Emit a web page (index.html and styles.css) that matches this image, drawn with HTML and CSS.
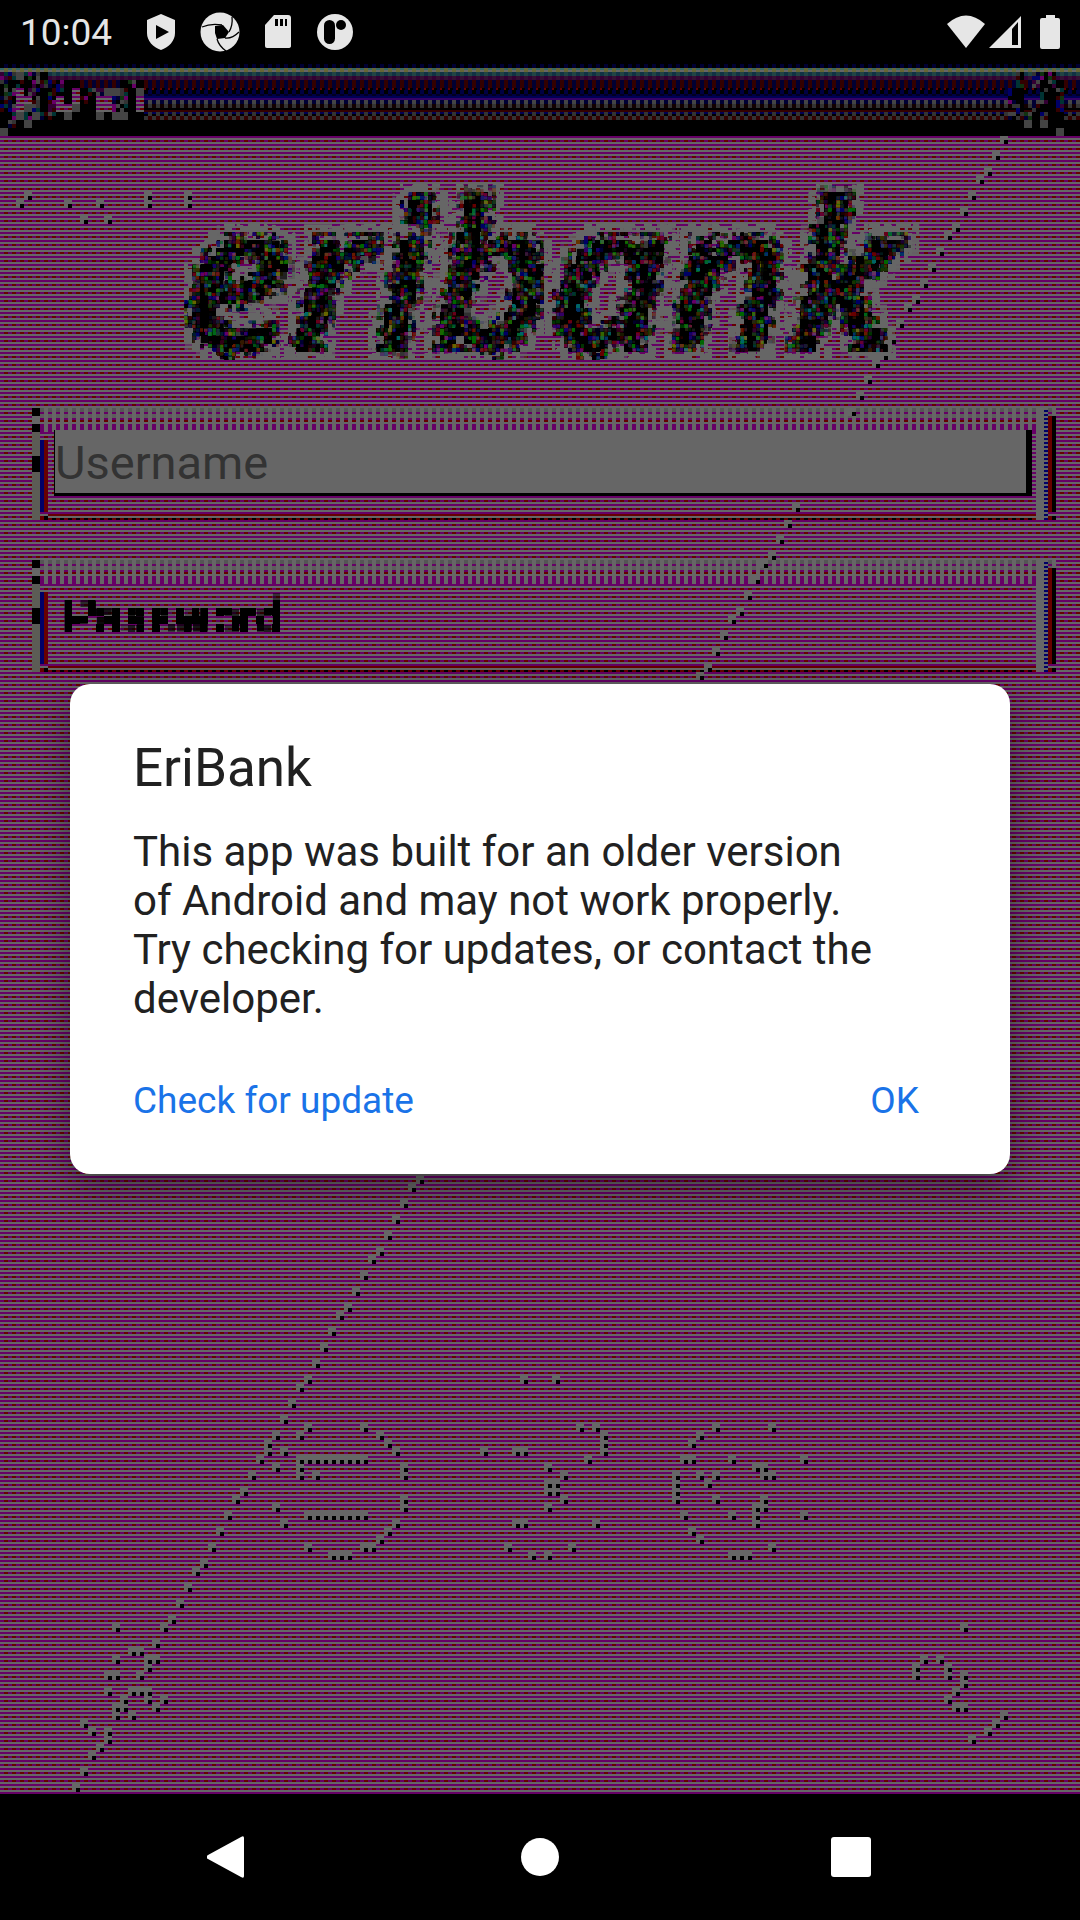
FILE: index.html
```html
<!DOCTYPE html>
<html lang="en">
<head>
<meta charset="utf-8">
<meta name="viewport" content="width=device-width, initial-scale=1">
<title>EriBank</title>
<link rel="stylesheet" href="styles.css">
</head>
<body>
<header class="status">
  <span class="clock">10:04</span>
  <div class="status-icons">
    <svg width="30" height="38" viewBox="0 0 30 38"><path fill="currentColor" fill-rule="evenodd" d="M15 1 29 7v13c0 8-6 14-14 17C7 34 1 28 1 20V7zM10 12v14l13-7z"/></svg>
    <svg width="40" height="40" viewBox="0 0 40 40"><circle cx="20" cy="20" r="19.500" fill="currentColor"/><path d="m15 14 8-1 6 7-4 6-8 1-2-6z"/><g fill="none" stroke="#000" stroke-width="1.300"><path d="M2 15q9-4 20-2M32 5q1 8-3 15M39 20q-7 7-14 6M26 39q-7-5-9-12M5 32"/></g></svg>
    <svg width="28" height="36" viewBox="0 0 28 36"><path fill="currentColor" d="M10 1h14q3 0 3 3v28q0 2-3 2H3q-2 0-2-2V11z"/><path d="M11 5h3v7h-3zM16 5h3v7h-3zM21 5h2v7h-2z"/></svg>
    <svg width="38" height="38" viewBox="0 0 38 38"><circle cx="19" cy="19" r="18" fill="currentColor"/><rect x="8" y="7" width="11" height="24" rx="5.500"/><circle cx="25" cy="12" r="5"/></svg>
  </div>
  <div class="signal-icons">
    <svg width="40" height="34" viewBox="0 0 40 34"><path fill="currentColor" d="M1 9Q20-8 39 9L20 33z"/></svg>
    <svg width="34" height="34" viewBox="0 0 34 34"><path fill="currentColor" fill-rule="evenodd" d="M33 1v32H1zM24 14v16h6V7z"/></svg>
    <svg class="battery" width="20" height="36" viewBox="0 0 20 36"><path fill="currentColor" d="M6 1h9v3h3q2 0 2 2v27q0 2-2 2H2q-2 0-2-2V6q0-2 2-2h4z"/></svg>
  </div>
</header>

<main class="screen">
  <div class="titlebar"></div>
  <h1 class="brand">eribank</h1>
  <form class="login">
    <div class="field"><input class="entry focused" type="text" placeholder="Username" aria-label="Username"></div>
    <div class="field"><input class="entry garbled" type="text" placeholder="Password" aria-label="Password"></div>
  </form>
  <svg class="mosaic" id="mosaic" aria-hidden="true" shape-rendering="crispEdges">
    <defs>
      <pattern id="dot" width="8" height="8" patternUnits="userSpaceOnUse"><path fill="#666" d="M0 0h8v8H0z"/><path d="M4 4h4v4H4z"/></pattern>
      <pattern id="stripe" width="8" height="8" patternUnits="userSpaceOnUse"><path fill="#666" d="M0 0h8v8H0z"/><path fill="#606" d="M0 0h8v2H0zM0 4h4v2H0z"/><path fill="#600" d="M4 4h4v2H4z"/></pattern>
      <filter id="blocks" x="0" y="0" width="100%" height="100%" color-interpolation-filters="sRGB">
        <feFlood x="3" y="3" width="2" height="2"/>
        <feComposite in2="SourceGraphic" operator="over" x="0" y="0" width="8" height="8" result="speck"/>
        <feTile in="speck" result="grid"/>
        <feComposite in="SourceGraphic" in2="grid" operator="in"/>
        <feMorphology operator="dilate" radius="3"/>
      </filter>
      <filter id="noisy" x="0" y="0" width="100%" height="100%" color-interpolation-filters="sRGB">
        <feFlood x="3" y="3" width="2" height="2" result="f8"/>
        <feOffset in="f8" x="0" y="0" width="8" height="8" result="c8"/>
        <feTile in="c8" result="g8"/>
        <feFlood x="1" y="1" width="2" height="2" result="f4"/>
        <feOffset in="f4" x="0" y="0" width="4" height="4" result="c4"/>
        <feTile in="c4" result="g4"/>
        <feMorphology in="SourceAlpha" operator="dilate" radius="12" result="wide"/>
        <feComposite in="wide" in2="g8" operator="in"/>
        <feMorphology operator="dilate" radius="3" result="haloShape"/>
        <feFlood flood-color="#666"/>
        <feComposite in2="haloShape" operator="in" result="halo"/>
        <feTurbulence type="fractalNoise" baseFrequency="0.150" numOctaves="1" seed="21"/>
        <feColorMatrix values="0 0 0 0 0  0 0 0 0 0  0 0 0 0 0  0 30 0 0 -12.500"/>
        <feComposite in2="g4" operator="in"/>
        <feMorphology operator="dilate" radius="1" result="haloMask"/>
        <feComposite in="halo" in2="haloMask" operator="in" result="raggedHalo"/>
        <feComposite in="SourceAlpha" in2="g8" operator="in"/>
        <feMorphology operator="dilate" radius="3" result="letters"/>
        <feTurbulence type="fractalNoise" baseFrequency="0.17" numOctaves="2" seed="7"/>
        <feColorMatrix values="3 0 0 0 -1.200  0 3 0 0 -1.250  0 0 3 0 -1.200  0 0 0 0 1"/>
        <feComponentTransfer><feFuncR type="discrete" tableValues="0 .1 .2 .4"/><feFuncG type="discrete" tableValues="0 .1 .2 .4"/><feFuncB type="discrete" tableValues="0 .1 .2 .4"/></feComponentTransfer>
        <feComposite in2="g4" operator="in"/>
        <feMorphology operator="dilate" radius="1" result="colour"/>
        <feMorphology in="SourceAlpha" operator="dilate" radius="6"/>
        <feComposite in2="g8" operator="in"/>
        <feMorphology operator="dilate" radius="3" result="rim"/>
        <feComposite in="colour" in2="rim" operator="in" result="edge"/>
        <feMorphology in="SourceAlpha" operator="erode" radius="10"/>
        <feComposite in2="g8" operator="in"/>
        <feMorphology operator="dilate" radius="3" result="core"/>
        <feTurbulence type="fractalNoise" baseFrequency="0.110" numOctaves="1" seed="3"/>
        <feColorMatrix values="0 0 0 0 0  0 0 0 0 0  0 0 0 0 0  30 0 0 0 -14"/>
        <feComposite in2="g4" operator="in"/>
        <feMorphology operator="dilate" radius="1" result="mask"/>
        <feComposite in="edge" in2="mask" operator="in" result="bits"/>
        <feMerge><feMergeNode in="raggedHalo"/><feMergeNode in="letters"/><feMergeNode in="bits"/><feMergeNode in="core"/></feMerge>
      </filter>
    </defs>
  </svg>
  <div class="scrim">
    <section class="dialog" role="dialog" aria-labelledby="dialog-title">
      <h2 class="dialog-title" id="dialog-title">EriBank</h2>
      <p class="dialog-text">This app was built for an older version of Android and may not work properly. Try checking for updates, or contact the developer.</p>
      <div class="actions"><button type="button">Check for update</button><button type="button">OK</button></div>
    </section>
  </div>
</main>

<nav class="navbar">
  <button type="button" aria-label="Back"><svg width="44" height="44" viewBox="0 0 44 44"><path fill="#fff" d="M34 2q3-2 3 1v38q0 3-3 1L1 24q-3-2 0-4z"/></svg></button>
  <button type="button" aria-label="Home"><svg width="44" height="44" viewBox="0 0 44 44"><circle cx="22" cy="22" r="19" fill="#fff"/></svg></button>
  <button type="button" aria-label="Recent apps"><svg width="44" height="44" viewBox="0 0 44 44"><rect x="2" y="2" width="40" height="40" rx="3" fill="#fff"/></svg></button>
</nav>
<script src="script.js"></script>
</body>
</html>
```
FILE: styles.css
```css
* { box-sizing: border-box; }

body {
  margin: 0;
  min-height: 100vh;
  display: flex;
  flex-direction: column;
  background: #000;
  font-family: Roboto, sans-serif;
}

button {
  border: 0;
  padding: 0;
  background: none;
  font: inherit;
}

.status {
  height: 64px;
  display: flex;
  align-items: center;
  padding: 0 20px;
  color: #e6e6e6;
}

.clock { font-size: 37px; line-height: 40px; padding-top: 2px; }

.status-icons {
  display: flex;
  align-items: center;
  gap: 24px;
  margin-left: 34px;
}

.signal-icons {
  display: flex;
  align-items: center;
  gap: 2px;
  margin-left: auto;
}

.battery { margin-left: 16px; }

.screen {
  position: relative;
  flex: 1;
  background:
    linear-gradient(#606 2px, #666 2px 4px, transparent 4px 6px, #666 6px) 0 0 / 8px 8px,
    linear-gradient(90deg, #606 4px, #600 4px) 0 0 / 8px 8px;
}

.titlebar {
  height: 72px;
  background:
    linear-gradient(90deg, #000 4px, #003 4px) 0 0 / 8px 4px repeat-x,
    linear-gradient(90deg, #366 4px, #663 4px) 0 4px / 8px 2px repeat-x,
    linear-gradient(90deg, #666 4px, #663 4px) 0 6px / 8px 2px repeat-x,
    linear-gradient(90deg, #134 4px, #244 4px) 0 8px / 8px 4px repeat-x,
    linear-gradient(90deg, #303 4px, #313 4px) 0 12px / 8px 4px repeat-x,
    linear-gradient(90deg, #300 4px, #003 4px) 0 16px / 8px 8px repeat-x,
    linear-gradient(90deg, #600 2px, #000 2px 5px, #003 5px) 0 24px / 8px 2px repeat-x,
    linear-gradient(90deg, #000 4px, #004 4px) 0 26px / 8px 4px repeat-x,
    linear-gradient(90deg, #004 4px, #002 4px) 0 30px / 8px 2px repeat-x,
    linear-gradient(#005 2px, #306 2px) 0 32px / 8px 4px repeat-x,
    linear-gradient(90deg, #444 4px, #003 4px) 4px 36px / 8px 4px repeat-x,
    linear-gradient(90deg, #333 4px, #100 4px) 4px 40px / 8px 4px repeat-x,
    linear-gradient(#000 2px, #300 2px) 0 44px / 8px 4px repeat-x,
    linear-gradient(90deg, #333 4px, #005 4px) 4px 48px / 8px 2px repeat-x,
    linear-gradient(90deg, #333 4px, #000 4px) 4px 50px / 8px 2px repeat-x,
    linear-gradient(90deg, #333 4px, #300 4px) 0 52px / 8px 4px repeat-x,
    #000;
}

.brand {
  margin: 0;
  height: 272px;
  font: italic 600 204px/268px "Open Sans", sans-serif;
  text-align: center;
  color: #000;
  filter: url(#noisy);
}

.login {
  display: grid;
  gap: 40px;
  padding: 0 24px 0 32px;
}

.field {
  height: 112px;
  padding: 22px 24px 24px 22px;
  background:
    linear-gradient(#000 8px, #666 8px 16px, #000 16px 24px, #5c5c55 24px 48px, #000 48px 64px, #5c5c55 64px) 0 0 / 8px 112px no-repeat,
    linear-gradient(90deg, #600 4px, #000 4px) 100% 8px / 8px 96px no-repeat,
    linear-gradient(#666 2px, #006 2px) calc(100% - 8px) 16px / 4px 4px repeat-y,
    linear-gradient(#666, #666) calc(100% - 12px) 0 / 8px 112px no-repeat,
    linear-gradient(90deg, #006 4px, #600 4px) 8px 32px / 8px 72px no-repeat,
    linear-gradient(#600, #600) 16px 106px / calc(100% - 32px) 2px no-repeat,
    linear-gradient(#666 2px, transparent 2px) 16px 108px / calc(100% - 32px) 4px no-repeat,
    linear-gradient(90deg, #600 4px, #000 4px) 0 108px / 8px 4px repeat-x,
    linear-gradient(90deg, #666 4px, transparent 4px) 4px 0 / 8px 24px repeat-x,
    linear-gradient(#555 4px, #606 4px 6px, #5c5c5c 6px 10px, #606 10px 12px, #600 12px 14px, #666 14px 16px, #606 16px) 0 0 / 8px 24px repeat-x;
}

.entry {
  display: block;
  width: 100%;
  height: 66px;
  border: 0;
  border-radius: 0;
  padding: 2px 0 0;
  outline: 0;
  background: none;
  font: 47px/56px Roboto, sans-serif;
  color: #333;
}

.entry::placeholder { color: #333; opacity: 1; }

.focused {
  background: #666;
  border: solid #000;
  border-width: 0 6px 3px 1px;
}

.garbled {
  margin: 2px 0 0 2px;
  height: 64px;
  padding-left: 8px;
  font-size: 50px;
  font-weight: 500;
  filter: url(#blocks);
}

.garbled::placeholder { color: #000; }

.mosaic {
  position: absolute;
  inset: 0;
  width: 100%;
  height: 100%;
  pointer-events: none;
}

.scrim {
  position: absolute;
  inset: 0;
  display: flex;
  align-items: center;
  justify-content: center;
  padding: 0 70px;
}

.dialog {
  width: 100%;
  padding: 53px 63px 38px;
  border-radius: 20px;
  background: #fff;
  color: #212121;
  box-shadow: 0 12px 36px rgba(0, 0, 0, .4);
}

.dialog-title {
  margin: 0 0 28px;
  font-size: 53px;
  font-weight: 400;
  line-height: 62px;
}

.dialog-text {
  margin: 0 0 43px;
  max-width: 745px;
  font-size: 42px;
  line-height: 49px;
}

.actions {
  display: flex;
  justify-content: space-between;
  padding-right: 28px;
  font-size: 37px;
  line-height: 70px;
}

.actions button { color: #1a73e8; }

.navbar {
  height: 126px;
  display: grid;
  grid-template-columns: repeat(3, 1fr);
  padding: 0 73px;
}

.navbar button {
  display: flex;
  align-items: center;
  justify-content: center;
}
```
FILE: script.js
```js
// Corrupted cells of the login screen, on an 8px grid: row -> columns.
const CELL = 8;
const TOP = 8; // rows taken by the status bar
const dots = {
  24: [3, 18, 23], 25: [2, 8, 12, 18, 23], 27: [10, 13],
  172: [38, 65, 69], 178: [38, 45, 72, 74, 89, 96],
  179: [34, 37, 47, 75, 87], 180: [48, 75, 86], 181: [33, 35, 49, 60, 64, 65, 75],
  182: [32, 37, 38, 39, 40, 41, 42, 43, 44, 45, 73, 85, 86, 91, 100],
  183: [34, 37, 50, 68, 94, 95], 184: [37, 39, 50, 70, 84, 87, 89, 95, 96],
  185: [68, 69, 84, 88], 186: [68, 69, 84], 187: [50, 70, 84, 89, 95],
  188: [34, 50, 68, 94, 95], 189: [38, 39, 40, 41, 42, 43, 44, 45, 85, 91, 94, 100],
  190: [35, 49, 64, 65, 74, 94], 191: [48, 86], 192: [47, 87],
  193: [38, 45, 46, 63, 71, 96], 194: [41, 42, 43, 66, 68, 91, 92, 93],
  203: [14, 120], 206: [16, 17], 207: [14, 18, 19, 115, 117],
  208: [18, 114, 118], 209: [13, 14, 17, 114, 118, 120], 210: [120],
  211: [13, 16, 17, 18, 119], 212: [15, 18, 20, 118], 213: [14, 15, 19, 119, 120],
  214: [14, 16, 125], 215: [10, 124], 216: [11, 13, 123], 217: [13, 121]
};

const svg = document.getElementById("mosaic");
const cell = (x, y, w = 1, h = 1) => `M${x * CELL} ${(y - TOP) * CELL}h${w * CELL}v${h * CELL}h${-w * CELL}z`;
function paint(fill, d) {
  const path = document.createElementNS("http://www.w3.org/2000/svg", "path");
  path.setAttribute("fill", fill);
  path.setAttribute("d", d);
  svg.append(path);
}

let d = "";
for (const [row, cols] of Object.entries(dots)) for (const col of cols) d += cell(col, +row);
// Long diagonal from the top right corner to the bottom left.
for (let col = 125; col >= 9; col--) {
  const row = Math.round(17 + (125 - col) * 1.776);
  const behindField = row >= 53 && row < 62;
  if (!behindField) d += cell(col, row);
}
paint("url(#dot)", d);

// Broken title: # black, s stripes, g grey, n coloured bits, . untouched.
const broken = {
  0: ["nngnn#............", "n#n#nnnn##.....#n#", "nnsnn#nn#s#nnggn#g", "nnssn#ns#sn#ssnn#s",
      "nnsgn#nssg##ssnn#s", "#ngngnn#g###g#gg##", "#n#g##############", "g#################"],
  126: [".n.nnn.", ".n.n#n#", "n#..n#n", "n#..n#n", ".n.n##n", "n.n#n##", "##g#g##", "######g"]
};
const palette = ["#303", "#003", "#000", "#606", "#333", "#033", "#300", "#000", "#131", "#444", "#006", "#000"];
const layers = {};
let seed = 11;
const random = () => (seed = (seed * 16807) % 2147483647) / 2147483647;
for (const [left, rows] of Object.entries(broken)) {
  rows.forEach((line, r) => [...line].forEach((kind, c) => {
    const x = +left + c, y = 9 + r;
    const add = (fill, part) => { layers[fill] = (layers[fill] || "") + part; };
    if (kind === "#") add("#000", cell(x, y));
    if (kind === "g") add("#444", cell(x, y));
    if (kind === "s") add("url(#stripe)", cell(x, y));
    if (kind === "n") for (let i = 0; i < 4; i++) {
      add(palette[Math.floor(random() * palette.length)], cell(x + (i % 2) / 2, y + (i >> 1) / 2, 0.5, 0.5));
    }
  }));
}
for (const [fill, part] of Object.entries(layers)) paint(fill, part);
```
